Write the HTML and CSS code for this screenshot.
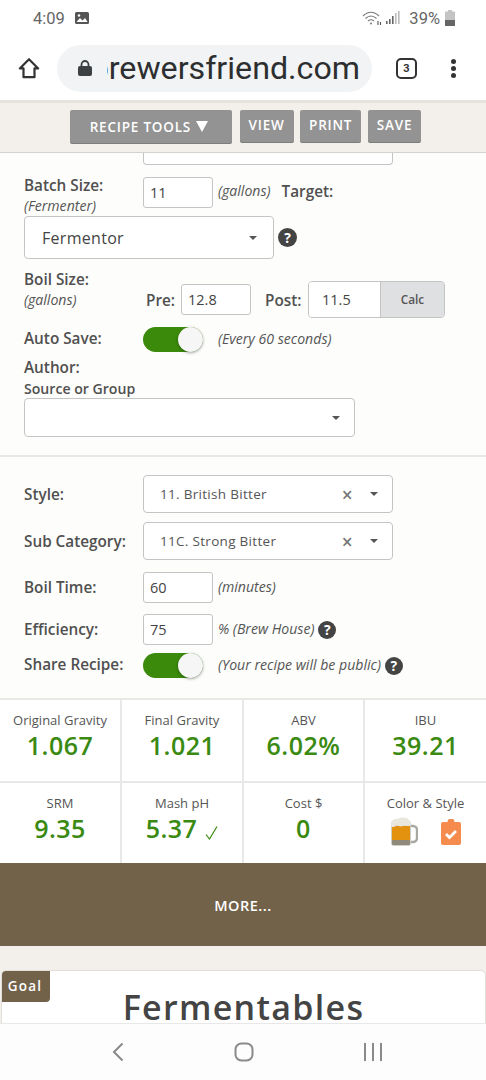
FILE: index.html
```html
<!DOCTYPE html>
<html lang="en">
<head>
<meta charset="utf-8">
<title>Brewer's Friend recipe</title>
<link rel="stylesheet" href="styles.css">
</head>
<body>
<div class="phone">
  <header class="status">
    <span class="time">4:09</span>
    <svg class="pic" viewBox="0 0 14 12" width="14" height="12"><rect width="14" height="12" rx="1.5" fill="#555"/><path d="M1.5 10l3.5-4 2.5 2.5L10 6l2.5 4z" fill="#fff"/><circle cx="4" cy="3.5" r="1.2" fill="#fff"/></svg>
    <span class="spacer"></span>
    <svg class="wifi" viewBox="0 0 20 15" width="20" height="15" fill="none" stroke="#777" stroke-width="1.1"><path d="M1 5c5-5 11-5 16 0M3.5 7.5c3.500-3.200 7.500-3.200 11 0M6 10c2-1.700 4-1.700 6 0"/><circle cx="9" cy="12.500" r="1" fill="#777" stroke="none"/><path d="M16 10v4M18.500 11v3" stroke="#555"/></svg>
    <svg class="signal" viewBox="0 0 14 14" width="14" height="14"><rect x="0" y="10" width="1.600" height="3" fill="#666"/><rect x="3" y="8" width="1.600" height="5" fill="#666"/><rect x="6" y="5" width="1.600" height="8" fill="#666"/><rect x="9" y="2" width="1.600" height="11" fill="#bbb"/><rect x="12" y="0" width="1.600" height="13" fill="#bbb"/></svg>
    <span class="pct">39%</span>
    <svg class="batt" viewBox="0 0 10 16" width="10" height="16"><path d="M3 0h4v1.500h3V16H0V1.500h3z" fill="#c4c4c4"/><rect y="10" width="10" height="6" fill="#666"/></svg>
  </header>
  <nav class="chrome">
    <svg class="home" viewBox="0 0 24 24" width="22" height="22" fill="none" stroke="#333" stroke-width="2.400" stroke-linejoin="round"><path d="M2 12.500L12 2.500l10 10h-4V22H6v-9.500z"/></svg>
    <div class="pill">
      <svg class="lock" viewBox="0 0 14 16" width="14" height="16"><path d="M3.500 7V4.500a3.500 3.500 0 017 0V7" fill="none" stroke="#3c4043" stroke-width="1.800"/><rect y="6" width="14" height="10" rx="2" fill="#3c4043"/></svg>
      <div class="url"><span>brewersfriend.com</span></div>
    </div>
    <div class="tabs">3</div>
    <div class="menu"><i></i><i></i><i></i></div>
  </nav>
  <div class="tools">
    <button class="btn btn-main">RECIPE TOOLS <span class="tri"></span></button>
    <button class="btn">VIEW</button>
    <button class="btn">PRINT</button>
    <button class="btn">SAVE</button>
  </div>
  <main class="page">
    <section class="form form-top">
      <div class="clipped"></div>
      <div class="row row-batch">
        <div class="lab-stack"><b>Batch Size:</b><em>(Fermenter)</em></div>
        <div class="input w70 i-batch">11</div>
        <em class="note n-batch">(gallons)</em>
        <b class="target">Target:</b>
      </div>
      <div class="row row-ferm">
        <div class="select s-ferm"><span>Fermentor</span><i class="caret"></i></div>
        <span class="help">?</span>
      </div>
      <div class="row row-boil">
        <div class="lab-stack"><b>Boil Size:</b><em>(gallons)</em></div>
        <b class="pre">Pre:</b>
        <div class="input w70 i-pre">12.8</div>
        <b class="post">Post:</b>
        <div class="group"><span class="g-val">11.5</span><span class="g-btn">Calc</span></div>
      </div>
      <div class="row row-auto">
        <b class="lab">Auto Save:</b>
        <div class="toggle"><i></i></div>
        <em class="note">(Every 60 seconds)</em>
      </div>
      <b class="author">Author:</b>
      <b class="source">Source or Group</b>
      <div class="select s-source"><i class="caret"></i></div>
    </section>
    <section class="form form-mid">
      <div class="row r-style">
        <b class="lab">Style:</b>
        <div class="select s-style"><span>11. British Bitter</span><span class="x">×</span><i class="caret"></i></div>
      </div>
      <div class="row r-style">
        <b class="lab">Sub Category:</b>
        <div class="select s-style"><span>11C. Strong Bitter</span><span class="x">×</span><i class="caret"></i></div>
      </div>
      <div class="row r-time">
        <b class="lab">Boil Time:</b>
        <div class="input w70">60</div>
        <em class="note">(minutes)</em>
      </div>
      <div class="row r-eff">
        <b class="lab">Efficiency:</b>
        <div class="input w70">75</div>
        <em class="note">% (Brew House)</em>
        <span class="help sm">?</span>
      </div>
      <div class="row r-share">
        <b class="lab">Share Recipe:</b>
        <div class="toggle"><i></i></div>
        <em class="note">(Your recipe will be public)</em>
        <span class="help sm">?</span>
      </div>
    </section>
    <section class="stats">
      <div class="stat"><p>Original Gravity</p><strong>1.067</strong></div>
      <div class="stat"><p>Final Gravity</p><strong>1.021</strong></div>
      <div class="stat"><p>ABV</p><strong>6.02%</strong></div>
      <div class="stat"><p>IBU</p><strong>39.21</strong></div>
      <div class="stat"><p>SRM</p><strong>9.35</strong></div>
      <div class="stat"><p>Mash pH</p><strong>5.37<svg class="tick" viewBox="0 0 13 14" width="13" height="14" fill="none" stroke="#3a8a12" stroke-width="1.200"><path d="M1 8.500L4.500 13 12 .5"/></svg></strong></div>
      <div class="stat"><p>Cost $</p><strong>0</strong></div>
      <div class="stat"><p>Color &amp; Style</p>
        <div class="icons">
          <svg viewBox="0 0 28 29" width="28" height="29"><path d="M19 9h4a4 4 0 014 4v8a4 4 0 01-4 4h-4" fill="none" stroke="#a8a8a2" stroke-width="2.400"/><rect x="1" y="4" width="20" height="25" rx="3" fill="#cfcdc6"/><rect x="2" y="9" width="18" height="15" fill="#e2920f"/><rect x="2" y="23" width="18" height="5" rx="1" fill="#8f8a7c"/><path d="M1 9C0 4 4 1 8 2c3-2 9-2 11 1 3 2 2 6 0 6-3 0-3-1-6 0-3 1-4 0-6-1-2 2-5 3-6 1z" fill="#e9e6dc"/></svg>
          <svg viewBox="0 0 20 26" width="20" height="26"><path d="M2 3h4.500a3.500 3.500 0 017 0H18a2 2 0 012 2v19a2 2 0 01-2 2H2a2 2 0 01-2-2V5a2 2 0 012-2z" fill="#f58b4c"/><path d="M5 15l3.500 3.500L15 12" fill="none" stroke="#fff" stroke-width="2.800"/></svg>
        </div>
      </div>
    </section>
    <div class="more">MORE...</div>
    <div class="after">
      <div class="card">
        <span class="goal">Goal</span>
        <h1>Fermentables</h1>
      </div>
    </div>
  </main>
  <footer class="navbar">
    <svg viewBox="0 0 14 20" width="14" height="20" fill="none" stroke="#8a8a8a" stroke-width="2"><path d="M11.500 1.500L3 10l8.500 8.500"/></svg>
    <svg viewBox="0 0 20 20" width="20" height="20" fill="none" stroke="#8a8a8a" stroke-width="2"><rect x="1.500" y="1.500" width="17" height="17" rx="6"/></svg>
    <svg viewBox="0 0 20 20" width="20" height="20" stroke="#8a8a8a" stroke-width="2"><path d="M2 1v18M10 1v18M18 1v18"/></svg>
  </footer>
</div>
</body>
</html>
```
FILE: styles.css
```css
* { box-sizing: border-box; }
html, body { margin: 0; padding: 0; background: #fff; }
body { font-family: "Open Sans", "Liberation Sans", sans-serif; color: #4a4a4a; }
.phone { width: 486px; height: 1080px; display: flex; flex-direction: column; overflow: hidden; }

.status { height: 36px; flex: none; display: flex; align-items: center; padding: 0 31px 0 33px; background: #fff; color: #666; font-family: Roboto, sans-serif; }
.time { font-size: 16.500px; }
.pic { margin-left: 10px; }
.spacer { flex: 1; }
.signal { margin-left: 4px; }
.pct { font-size: 16.500px; margin-left: 9px; }
.batt { margin-left: 5px; }

.chrome { height: 64px; flex: none; display: flex; align-items: center; background: #fff; }
.home { margin-left: 18px; flex: none; }
.pill { width: 315px; height: 47px; margin-left: 17px; background: #f1f3f4; border-radius: 24px; display: flex; align-items: center; padding-left: 21px; flex: none; }
.lock { flex: none; }
.url { width: 253px; margin-left: 15px; overflow: hidden; display: flex; justify-content: flex-end; white-space: nowrap; font-family: Roboto, sans-serif; font-size: 32.200px; line-height: 44px; color: #2c2e30; }
.tabs { width: 21px; height: 21px; margin-left: 24px; border: 2.200px solid #333; border-radius: 5px; font: 700 11px/17px Roboto, sans-serif; text-align: center; color: #333; flex: none; }
.menu { margin-left: 34px; display: flex; flex-direction: column; gap: 2px; }
.menu i { display: block; width: 5px; height: 5px; border-radius: 50%; background: #333; }

.tools { height: 53px; flex: none; background: #f3efea; border-top: 3px solid #e6e2dc; border-bottom: 1px solid #d6d3ce; display: flex; align-items: flex-start; padding: 7px 0 0 70px; gap: 6.500px; }
.btn { height: 32px; border: 0; border-radius: 2px; background: #939393; color: #fff; font: 600 13.500px/1 "Open Sans", sans-serif; letter-spacing: 0.800px; padding: 0 9px 1px; box-shadow: 0 1px 0 #7d7d7d; }
.btn-main { width: 162px; height: 33px; margin-right: 1px; padding: 2px 4px 0 0; }
.tri { display: inline-block; width: 0; height: 0; border: 6.500px solid transparent; border-top: 11px solid #fff; border-bottom: 0; margin-left: 1px; }

.page { flex: 1; min-height: 0; overflow: hidden; background: #fdfdfb; display: flex; flex-direction: column; }
b { font-weight: 600; font-size: 15.300px; color: #505050; }
em { font-size: 14.100px; color: #555; font-style: italic; }
.form { padding-left: 24px; }
.form-top { height: 304px; flex: none; border-bottom: 2px solid #e8e8e6; }
.clipped { width: 250px; height: 12px; margin-left: 119px; border: 1px solid #c4c4c4; border-top: 0; border-radius: 0 0 4px 4px; background: #fff; }
.row { display: flex; align-items: center; }
.lab-stack { width: 119px; display: flex; flex-direction: column; flex: none; }
.lab { width: 119px; flex: none; }
.input { height: 31px; border: 1px solid #c4c4c4; border-radius: 3px; background: #fff; font-size: 14.500px; line-height: 29px; padding-left: 6px; color: #444; }
.w70 { width: 70px; flex: none; }
.note { margin-left: 5px; }
.target { margin-left: 11px; line-height: 20px; margin-top: 6px; }
.row-batch { margin-top: 10px; height: 41px; align-items: flex-start; }
.row-batch .lab-stack b { line-height: 20px; }
.row-batch .lab-stack em { line-height: 21px; }
.i-batch { margin-top: 2px; }
.n-batch { margin-top: 6px; line-height: 20px; }
.select { position: relative; border: 1px solid #c4c4c4; border-radius: 4px; background: #fff; display: flex; align-items: center; }
.caret { position: absolute; top: 50%; margin-top: -2px; width: 0; height: 0; border: 4px solid transparent; border-top: 4.500px solid #555; border-bottom: 0; }
.s-ferm { width: 250px; height: 43px; padding-left: 17px; font-size: 16px; letter-spacing: 0.300px; color: #444; }
.s-ferm .caret { right: 16px; }
.help { width: 19px; height: 19px; margin-left: 4px; border-radius: 50%; background: #444; color: #fff; font: 700 14px/19px "Open Sans", sans-serif; text-align: center; flex: none; }
.help.sm { width: 18px; height: 18px; line-height: 18px; margin-left: 4px; }
.row-boil { margin-top: 10px; height: 48px; align-items: flex-start; }
.row-boil .lab-stack b { line-height: 20px; }
.row-boil .lab-stack em { line-height: 22px; }
.pre { margin: 21px 0 0 3px; width: 35px; flex: none; line-height: 20px; }
.i-pre { margin-top: 15px; }
.post { margin: 21px 0 0 14px; width: 43px; flex: none; line-height: 20px; }
.group { width: 137px; height: 37px; margin-top: 12px; display: flex; border: 1px solid #c4c4c4; border-radius: 4px; overflow: hidden; font-size: 14.500px; flex: none; }
.g-val { width: 71px; background: #fff; padding-left: 13px; line-height: 35px; color: #444; }
.g-btn { flex: 1; background: #dfe0e2; border-left: 1px solid #c4c4c4; text-align: center; font-size: 11.800px; font-weight: 600; line-height: 35px; color: #555; }
.row-auto { margin-top: 10px; height: 25px; }
.row-auto .lab { padding-bottom: 4px; }
.row-auto .note { padding-bottom: 2px; }
.toggle { width: 60px; height: 25px; border-radius: 13px; background: #3b8a0b; position: relative; flex: none; }
.toggle i { position: absolute; right: 0; top: 0; width: 25px; height: 25px; border-radius: 50%; background: #f6f6f6; box-shadow: 0 1px 3px rgba(0,0,0,.35); }
.toggle + .note { margin-left: 15px; }
.author { display: block; margin-top: 3px; line-height: 24px; }
.source { display: block; font-size: 14.100px; line-height: 20px; }
.s-source { width: 331px; height: 39px; margin-top: -1px; }
.s-source .caret { right: 14px; }
.form-mid { height: 243px; flex: none; padding-top: 18px; border-bottom: 2px solid #e8e8e6; }
.r-style { height: 38px; margin-bottom: 9px; }
.s-style { width: 250px; height: 38px; padding-left: 16px; font-size: 13.500px; letter-spacing: 0.300px; color: #555; }
.s-style .caret { right: 14px; }
.x { position: absolute; right: 39px; top: 8px; font-size: 19px; font-weight: 600; line-height: 22px; color: #777; }
.r-time { height: 31px; margin-top: 12px; }
.r-time .lab, .r-eff .lab { padding-bottom: 2px; }
.r-time .note, .r-eff .note { padding-bottom: 2px; }
.r-eff { height: 31px; margin-top: 11px; }
.r-share { height: 25px; margin-top: 8px; }
.r-share .lab { padding-bottom: 4px; }
.r-share .note { padding-bottom: 2px; }

.stats { height: 163px; flex: none; display: grid; grid-template-columns: 122px 122px 121px 121px; grid-template-rows: 83px 80px; background: #fff; }
.stat { border-right: 2px solid #e8e8e8; border-bottom: 2px solid #e8e8e8; text-align: center; padding-top: 11px; }
.stat:nth-child(4n) { border-right: 0; }
.stat:nth-child(n+5) { border-bottom: 0; }
.stat p { margin: 0; font-size: 13px; line-height: 18px; color: #555; }
.stat strong { display: block; font-size: 25px; font-weight: 600; line-height: 32px; color: #3a8a12; letter-spacing: 0.500px; }
.tick { margin-left: 8px; vertical-align: -2px; }
.icons { display: flex; justify-content: space-between; align-items: center; padding: 5px 25px 0 25px; }

.more { height: 83px; flex: none; background: #73624a; color: #fff; font-size: 14.500px; font-weight: 600; letter-spacing: 0.500px; text-align: center; line-height: 85px; }
.after { flex: 1; min-height: 0; overflow: hidden; background: #f3efea; padding: 24px 0 0 1px; }
.card { position: relative; height: 100px; background: #fff; border: 1px solid #e0dfdc; border-radius: 5px; text-align: center; }
.goal { position: absolute; left: 0; top: 0; width: 48px; height: 31px; padding-right: 2px; background: #73624a; color: #fff; border-radius: 4px 0 4px 0; font-size: 13.500px; font-weight: 600; letter-spacing: 1.200px; line-height: 31px; text-align: center; }
h1 { margin: 0; padding-top: 13px; font-size: 34px; font-weight: 600; line-height: 46px; letter-spacing: 1.300px; color: #444; }

.navbar { height: 57px; flex: none; background: #fdfdfd; border-top: 1px solid #e8e8e8; display: flex; align-items: flex-start; padding: 18px 0 0 111px; gap: 109px; }
```
